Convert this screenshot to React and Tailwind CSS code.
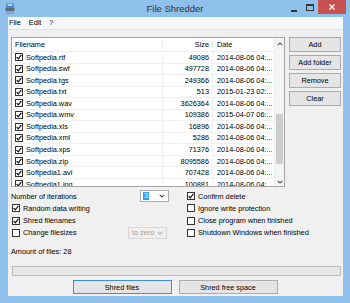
import React from "react";

const files = [
  ["Softpedia.rtf", "49086", "2014-08-06 04:..."],
  ["Softpedia.swf", "497728", "2014-08-06 04:..."],
  ["Softpedia.tgs", "249366", "2014-08-06 04:..."],
  ["Softpedia.txt", "513", "2015-01-23 02:..."],
  ["Softpedia.wav", "3626364", "2014-08-06 04:..."],
  ["Softpedia.wmv", "109386", "2015-04-07 06:..."],
  ["Softpedia.xls", "16896", "2014-08-06 04:..."],
  ["Softpedia.xml", "5286", "2014-08-06 04:..."],
  ["Softpedia.xps", "71376", "2014-08-06 04:..."],
  ["Softpedia.zip", "8095586", "2014-08-06 04:..."],
  ["Softpedia1.avi", "707428", "2014-08-06 04:..."],
  ["Softpedia1.jpg", "100881", "2014-08-06 04:..."],
];

function Check({ on }) {
  return (
    <span className="flex h-[8px] w-[8px] shrink-0 items-center justify-center border border-[#333] bg-white">
      {on && (
        <svg viewBox="0 0 6 6" className="h-[6px] w-[6px]">
          <path d="M0.6 3.1 L2.3 4.8 L5.4 0.9" stroke="#1a1a1a" strokeWidth="1.3" fill="none" />
        </svg>
      )}
    </span>
  );
}

function Chevron({ color = "#444" }) {
  return (
    <svg viewBox="0 0 6 4" className="h-[4px] w-[6px]">
      <path d="M0.7 0.8 L3 3 L5.3 0.8" stroke={color} strokeWidth="1.1" fill="none" />
    </svg>
  );
}

function Option({ on, label }) {
  return (
    <div className="flex h-[12.3px] items-center gap-[3px]">
      <Check on={on} />
      <span>{label}</span>
    </div>
  );
}

function SideButton({ children }) {
  return (
    <div className="flex h-[15px] items-center justify-center border border-[#acacac] bg-[#e5e5e5]">
      {children}
    </div>
  );
}

export default function App() {
  return (
    <div className="flex h-[303px] w-[350px] flex-col bg-[#8fc1ec] font-['Liberation_Sans',Arial,sans-serif] text-[7.3px] leading-none text-black">
      {/* title bar */}
      <div className="grid h-[17px] grid-cols-[1fr_auto_1fr] items-start">
        <div className="pl-[5px] pt-[3px]">
          <svg viewBox="0 0 10 11" className="h-[11px] w-[10px]">
            <rect x="1" y="0.5" width="8" height="4" rx="0.8" fill="#3d86d6" />
            <rect x="2.5" y="1.2" width="5" height="1.6" fill="#cfe4fa" />
            <rect x="0.5" y="4.5" width="9" height="3.5" fill="#5b6b7e" />
            <rect x="1.5" y="8" width="1" height="3" fill="#7d8b9b" />
            <rect x="3.5" y="8" width="1" height="3" fill="#7d8b9b" />
            <rect x="5.5" y="8" width="1" height="3" fill="#7d8b9b" />
            <rect x="7.5" y="8" width="1" height="3" fill="#7d8b9b" />
          </svg>
        </div>
        <div className="pt-[4px] text-[9.5px] text-[#333]">File Shredder</div>
        <div className="flex items-start justify-end pr-[4px]">
          <div className="mt-[10px] mr-[9px] h-[1.5px] w-[6px] bg-[#333]" />
          <div className="mt-[4px] mr-[4px] h-[7px] w-[8px] border border-t-2 border-[#333]" />
          <div className="flex h-[14px] w-[28px] items-center justify-center bg-[#c75050]">
            <svg viewBox="0 0 6 6" className="h-[6px] w-[6px]">
              <path d="M0.5 0.5 L5.5 5.5 M5.5 0.5 L0.5 5.5" stroke="#fff" strokeWidth="1.3" />
            </svg>
          </div>
        </div>
      </div>

      <div className="flex flex-1 flex-col pb-[7px] pl-[8px] pr-[7px]">
        {/* menu */}
        <div className="flex h-[13px] items-center gap-[8px] border-b border-[#e3e3e3] bg-[#f7f8fa] pl-[1px]">
          <span>File</span>
          <span>Edit</span>
          <span>?</span>
        </div>

        {/* client */}
        <div className="flex flex-1 flex-col bg-[#f0f0f0] pl-[3px] pr-[2px] pt-[7px]">
          <div className="flex gap-[4px]">
            <div className="flex h-[150px] w-[274px] border border-[#a5a5a5] bg-white">
              <div className="flex w-[262px] flex-col overflow-hidden">
                <div className="flex h-[14px] shrink-0 items-center border-b border-[#ececec]">
                  <div className="w-[151px] border-r border-[#e5e5e5] pl-[3px]">Filename</div>
                  <div className="w-[50px] border-r border-[#e5e5e5] pr-[3px] text-right">Size</div>
                  <div className="pl-[4px]">Date</div>
                </div>
                {files.map(([name, size, date]) => (
                  <div key={name} className="flex h-[11.55px] shrink-0 items-center border-b border-[#f0f0f0]">
                    <div className="flex h-full w-[151px] items-center gap-[3px] border-r border-[#f0f0f0] pl-[3px]">
                      <Check on />
                      <span>{name}</span>
                    </div>
                    <div className="flex h-full w-[50px] items-center justify-end border-r border-[#f0f0f0] pr-[3px]">{size}</div>
                    <div className="pl-[4px]">{date}</div>
                  </div>
                ))}
              </div>
              {/* scrollbar */}
              <div className="flex w-[10px] flex-col items-center border-l border-[#ebebeb] bg-[#f4f4f4]">
                <div className="flex h-[14px] items-center justify-center">
                  <svg viewBox="0 0 6 4" className="h-[4px] w-[6px]">
                    <path d="M0.7 3.2 L3 1 L5.3 3.2" stroke="#555" strokeWidth="1.1" fill="none" />
                  </svg>
                </div>
                <div className="flex-1 w-full px-[1px] pt-[65px] pb-[14px]">
                  <div className="h-[50px] w-full bg-[#cdcdcd]" />
                </div>
                <div className="flex h-[10px] items-center justify-center">
                  <Chevron color="#555" />
                </div>
              </div>
            </div>
            <div className="flex w-[52px] flex-col gap-[3px]">
              <SideButton>Add</SideButton>
              <SideButton>Add folder</SideButton>
              <SideButton>Remove</SideButton>
              <SideButton>Clear</SideButton>
            </div>
          </div>

          {/* options */}
          <div className="mt-[3px] flex">
            <div className="flex w-[176px] flex-col">
              <div className="flex h-[12.3px] items-center">
                <span className="w-[129px]">Number of iterations</span>
                <div className="flex h-[12px] w-[29px] items-center justify-between border border-[#abadb3] bg-white pl-[2px] pr-[3px]">
                  <span className="bg-[#3399ff] px-[1px] text-white">3</span>
                  <Chevron />
                </div>
              </div>
              <div className="pl-[1px]">
                <Option on label="Random data writing" />
                <Option on label="Shred filenames" />
                <div className="flex h-[12.3px] items-center">
                  <div className="flex w-[116px] items-center gap-[3px]">
                    <Check />
                    <span>Change filesizes</span>
                  </div>
                  <div className="flex h-[12px] w-[39px] items-center justify-between border border-[#d9d9d9] bg-[#efefef] pl-[3px] pr-[3px] text-[#a0a0a0]">
                    <span>to zero</span>
                    <Chevron color="#b0b0b0" />
                  </div>
                </div>
              </div>
            </div>
            <div className="flex flex-col">
              <Option on label="Confirm delete" />
              <Option label="Ignore write protection" />
              <Option label="Close program when finished" />
              <Option label="Shutdown Windows when finished" />
            </div>
          </div>

          <div className="mt-[6px] flex h-[12px] items-center">Amount of files: 28</div>

          <div className="mt-[9px] ml-[1px] h-[10px] border border-[#bcbcbc] bg-[#e6e6e6]" />

          <div className="mt-[4px] flex justify-center gap-[7px] pr-[2px]">
            <div className="flex h-[14px] w-[99px] items-center justify-center border border-[#3c8fe0] bg-[#e5e5e5]">
              Shred files
            </div>
            <div className="flex h-[14px] w-[99px] items-center justify-center border border-[#acacac] bg-[#e5e5e5]">
              Shred free space
            </div>
          </div>
        </div>
      </div>
    </div>
  );
}
